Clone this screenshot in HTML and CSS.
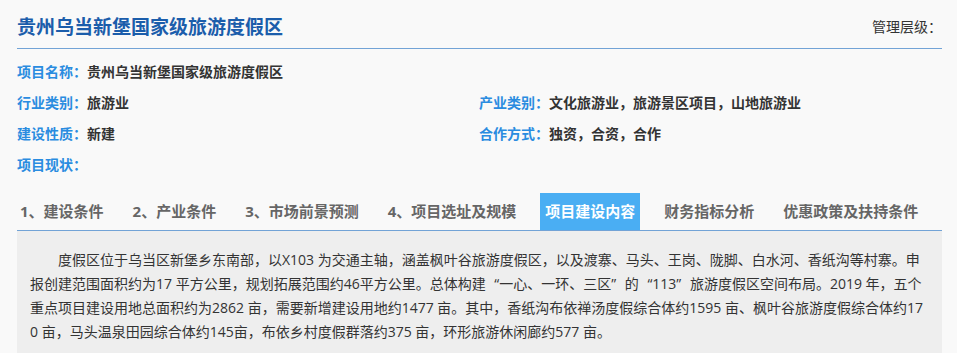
FILE: index.html
```html
<!DOCTYPE html>
<html lang="zh-CN">
<head>
  <meta charset="UTF-8">
  <meta name="viewport" content="width=device-width, initial-scale=1.0">
  <title>贵州乌当新堡国家级旅游度假区</title>
  <link rel="stylesheet" href="styles.css">
</head>
<body>
  <div class="page">
    <div class="header">
      <h1 class="title">贵州乌当新堡国家级旅游度假区</h1>
      <span class="level">管理层级：</span>
    </div>

    <div class="info">
      <div class="item full"><span class="label">项目名称：</span><span class="value">贵州乌当新堡国家级旅游度假区</span></div>
      <div class="item"><span class="label">行业类别：</span><span class="value">旅游业</span></div>
      <div class="item"><span class="label">产业类别：</span><span class="value">文化旅游业，旅游景区项目，山地旅游业</span></div>
      <div class="item"><span class="label">建设性质：</span><span class="value">新建</span></div>
      <div class="item"><span class="label">合作方式：</span><span class="value">独资，合资，合作</span></div>
      <div class="item full"><span class="label">项目现状：</span><span class="value"></span></div>
    </div>

    <ul class="tabs">
      <li class="tab">1、建设条件</li>
      <li class="tab">2、产业条件</li>
      <li class="tab">3、市场前景预测</li>
      <li class="tab">4、项目选址及规模</li>
      <li class="tab active">项目建设内容</li>
      <li class="tab">财务指标分析</li>
      <li class="tab">优惠政策及扶持条件</li>
    </ul>

    <div class="tab-content">
      <p>度假区位于乌当区新堡乡东南部，以X103 为交通主轴，涵盖枫叶谷旅游度假区，以及渡寨、马头、王岗、陇脚、白水河、香纸沟等村寨。申报创建范围面积约为17 平方公里，规划拓展范围约46平方公里。总体构建<span class="q-open">“</span>一心、一环、三区<span class="q-close">”</span>的<span class="q-open">“</span>113<span class="q-close">”</span>旅游度假区空间布局。2019 年，五个重点项目建设用地总面积约为2862 亩，需要新增建设用地约1477 亩。其中，香纸沟布依禅汤度假综合体约1595 亩、枫叶谷旅游度假综合体约170 亩，马头温泉田园综合体约145亩，布依乡村度假群落约375 亩，环形旅游休闲廊约577 亩。</p>
    </div>
  </div>
</body>
</html>
```

FILE: styles.css
```css
body {
  margin: 0;
  padding: 0;
  background: #f9f9f9;
  font-family: 'Open Sans', 'Noto Sans CJK SC', sans-serif;
  color: #333;
}

.page {
  padding: 0 15px 0 17px;
}

.header {
  display: flex;
  justify-content: space-between;
  align-items: center;
  padding: 14px 0 8px;
  border-bottom: 1px solid #72a3d6;
}

.title {
  margin: 0;
  font-size: 19px;
  line-height: 26px;
  font-weight: bold;
  color: #1b5dab;
}

.level {
  font-size: 14px;
  line-height: 26px;
  color: #333;
}

.info {
  display: grid;
  grid-template-columns: 462px 1fr;
  padding-top: 7px;
}

.item {
  font-size: 14px;
  line-height: 31px;
  font-weight: bold;
  white-space: nowrap;
}

.item.full {
  grid-column: 1 / 3;
}

.label {
  color: #2a8ce0;
}

.value {
  color: #333;
}

.tabs {
  display: flex;
  list-style: none;
  margin: 13px 0 0;
  padding: 0;
  border-bottom: 1px solid #72a3d6;
}

.tab {
  margin-right: 19px;
  padding: 0 5px;
  font-size: 15px;
  line-height: 37px;
  font-weight: bold;
  color: #666;
  white-space: nowrap;
}

.tab:first-child {
  margin-left: -2px;
}

.tab.active {
  background-color: #4aaef3;
  color: #fff;
}

.tab-content {
  background-color: #eeeeee;
  padding: 17px 17px 9px 13px;
}

.tab-content p {
  margin: 0;
  font-size: 14px;
  line-height: 24px;
  text-indent: 2em;
  word-break: break-all;
}

/* quotes take a full em, like the CJK ones */
.q-open {
  margin-left: 0.62em;
}

.q-close {
  margin-right: 0.62em;
}
```
